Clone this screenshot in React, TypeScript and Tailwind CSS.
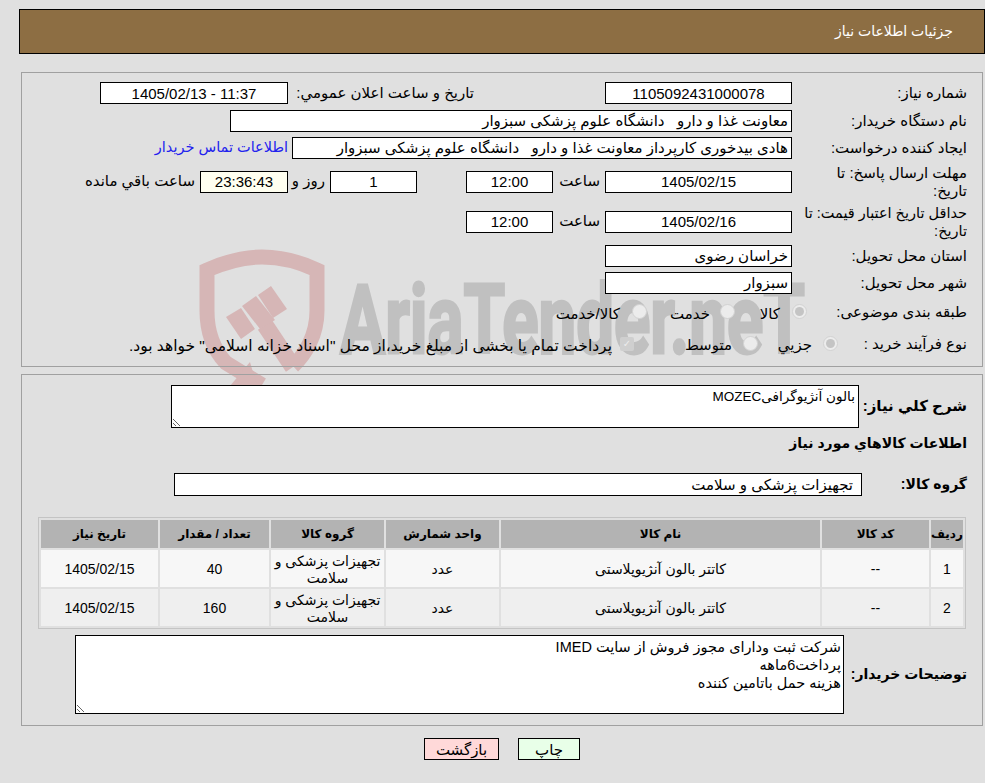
import clsx from "clsx";

const rows = [
  { id: "1", qty: "40" },
  { id: "2", qty: "160" },
];

function Box({ className, cream, children }: { className?: string; cream?: boolean; children?: React.ReactNode }) {
  return (
    <div
      className={clsx(
        "flex h-[22px] shrink-0 items-center overflow-hidden border border-black pt-[1px] whitespace-pre",
        cream ? "bg-[#fffff0]" : "bg-white",
        className,
      )}
    >
      {children}
    </div>
  );
}

function Label({ className, children }: { className?: string; children: React.ReactNode }) {
  return <div className={clsx("w-[175px] shrink-0 leading-[18px]", className ?? "pl-[8px]")}>{children}</div>;
}

function Radio({ checked }: { checked?: boolean }) {
  return (
    <span className="flex h-[15px] w-[15px] shrink-0 items-center justify-center rounded-full border border-[#d2d2d2] bg-[#ececec]">
      {checked && <span className="h-[9px] w-[9px] rounded-full bg-[#c4c4c4]" />}
    </span>
  );
}

function Watermark() {
  return (
    <svg className="pointer-events-none absolute left-0 top-0" width="985" height="783" viewBox="0 0 985 783" fill="none">
      <path
        d="M262 385 L226 363 C213 349 207 331 207 311 L207 270 C225 262 245 257 262 257 C280 257 300 262 317 270 L317 311 C317 335 305 355 293 366"
        stroke="#d6b6b6"
        strokeWidth="15"
      />
      <path d="M265 325 L293 367" stroke="#d6b6b6" strokeWidth="17" />
      <path d="M250 362 L257 386 L230 386 Z" fill="#d6b6b6" />
      <path d="M226 317 L241 308 L255 329 L241 339 Z" fill="#d6b6b6" />
      <path d="M242 306 L256 296 L275 320 L260 329 Z" fill="#d6b6b6" />
      <path d="M258 295 L271 286 L287 309 L273 318 Z" fill="#d6b6b6" />
      <text
        x="340"
        y="353"
        direction="ltr"
        textLength="465"
        lengthAdjust="spacingAndGlyphs"
        fontFamily="Roboto, sans-serif"
        fontWeight="700"
        fontSize="96"
        fill="#c0c0c0"
        stroke="#c0c0c0"
        strokeWidth="3"
      >
        AriaTender.neT
      </text>
    </svg>
  );
}

export default function App() {
  return (
    <div
      dir="rtl"
      className="relative h-[783px] w-[985px] overflow-hidden bg-[#e0e0e0] pt-[9px] font-['Liberation_Sans','DejaVu_Sans',sans-serif] text-[15px] text-black"
    >
      <Watermark />
      <div className="relative flex h-[45px] w-[966px] items-center border border-black bg-[#8d6e43] pr-[31px] text-[14px] text-white">
        جزئیات اطلاعات نیاز
      </div>

      <section className="relative mr-[2px] mt-[18px] h-[295px] w-[962px] border border-[#a0a0a0] pr-[15px] pt-[9px]">
        <div className="flex items-center">
          <Label>شماره نیاز:</Label>
          <Box className="w-[187px] justify-center">1105092431000078</Box>
          <div className="mr-[131px] w-[181px] shrink-0 whitespace-nowrap">تاریخ و ساعت اعلان عمومي:</div>
          <Box className="mr-[5px] w-[188px] justify-center">11:37 - 1405/02/13</Box>
        </div>
        <div className="mt-[5px] flex items-center">
          <Label>نام دستگاه خریدار:</Label>
          <Box className="w-[562px] pr-[3px]">معاونت غذا و دارو   دانشگاه علوم پزشکی سبزوار</Box>
        </div>
        <div className="mt-[5px] flex items-center">
          <Label>ایجاد کننده درخواست:</Label>
          <Box className="w-[500px] pr-[3px]">هادی بیدخوری کارپرداز معاونت غذا و دارو   دانشگاه علوم پزشکی سبزوار</Box>
          <a className="mr-[4px] whitespace-nowrap text-[14.5px] text-[#2222ee]">اطلاعات تماس خریدار</a>
        </div>
        <div className="mt-[5px] flex items-center">
          <Label>مهلت ارسال پاسخ: تا تاریخ:</Label>
          <Box className="w-[187px] justify-center">1405/02/15</Box>
          <div className="w-[52px] shrink-0 pr-[5px]">ساعت</div>
          <Box className="w-[87px] justify-center">12:00</Box>
          <Box className="mr-[49px] w-[87px] justify-center">1</Box>
          <div className="w-[42px] shrink-0 whitespace-nowrap pr-[5px]">روز و</div>
          <Box cream className="w-[88px] justify-center">23:36:43</Box>
          <div className="shrink-0 whitespace-nowrap pr-[5px]">ساعت باقي مانده</div>
        </div>
        <div className="mt-[4px] flex items-center">
          <Label className="pl-[2px] text-[14.5px]">حداقل تاریخ اعتبار قیمت: تا تاریخ:</Label>
          <Box className="w-[187px] justify-center">1405/02/16</Box>
          <div className="w-[52px] shrink-0 pr-[5px]">ساعت</div>
          <Box className="w-[87px] justify-center">12:00</Box>
        </div>
        <div className="mt-[5px] flex items-center">
          <Label>استان محل تحویل:</Label>
          <Box className="w-[187px] pr-[3px]">خراسان رضوی</Box>
        </div>
        <div className="mt-[5px] flex items-center">
          <Label>شهر محل تحویل:</Label>
          <Box className="w-[187px] pr-[3px]">سبزوار</Box>
        </div>
        <div className="mt-[10px] flex h-[16px] items-center">
          <Label>طبقه بندی موضوعی:</Label>
          <span className="mr-[-15px]"><Radio checked /></span>
          <span className="mr-[12px] mt-[6px] w-[20px] shrink-0 whitespace-nowrap">کالا</span>
          <span className="mr-[25px]"><Radio /></span>
          <span className="mr-[10px] mt-[6px] w-[39px] shrink-0 whitespace-nowrap">خدمت</span>
          <span className="mr-[24px]"><Radio /></span>
          <span className="mr-[12px] mt-[6px] shrink-0 whitespace-nowrap">کالا/خدمت</span>
        </div>
        <div className="mt-[16px] flex h-[16px] items-center">
          <Label>نوع فرآیند خرید :</Label>
          <span className="mr-[-46px]"><Radio checked /></span>
          <span className="mr-[11px] mt-[4px] w-[34px] shrink-0 whitespace-nowrap">جزيي</span>
          <span className="mr-[20px]"><Radio /></span>
          <span className="mr-[11px] mt-[4px] w-[45px] shrink-0 whitespace-nowrap">متوسط</span>
          <span className="mr-[53px] flex h-[14px] w-[14px] shrink-0 items-center justify-center rounded-[2px] bg-[#cfcfcf] text-[10px] leading-none text-[#ececec]">✓</span>
          <span className="mr-[8px] mt-[4px] shrink-0 whitespace-nowrap text-[15.5px]">پرداخت تمام یا بخشی از مبلغ خرید،از محل "اسناد خزانه اسلامی" خواهد بود.</span>
        </div>
      </section>

      <section className="relative mr-[2px] mt-[7px] h-[352px] w-[962px] border border-[#a0a0a0] pr-[15px] pt-[10px]">
        <div className="flex items-center">
          <div className="w-[108px] shrink-0 text-[15px] font-bold">شرح کلي نیاز:</div>
          <textarea
            readOnly
            value="بالون آنژیوگرافیMOZEC"
            className="resize h-[43px] w-[688px] shrink-0 border border-black bg-white px-[3px] py-[2px] text-[13.5px] leading-[18px] outline-none"
          />
        </div>
        <div className="mt-[5px] h-[22px] text-[14px] font-bold">اطلاعات کالاهاي مورد نیاز</div>
        <div className="mt-[18px] flex items-center">
          <div className="w-[105px] shrink-0 text-[14px] font-bold">گروه کالا:</div>
          <Box className="h-[23px] w-[688px] pr-[8px]">تجهیزات پزشکی و سلامت</Box>
        </div>
        <table className="mr-[1px] mt-[21px] w-[928px] table-fixed border-separate border-spacing-[2px] border border-[#c4c4c4] text-center text-[14px]">
          <colgroup>
            <col className="w-[32px]" />
            <col className="w-[107px]" />
            <col className="w-[319px]" />
            <col className="w-[113px]" />
            <col className="w-[113px]" />
            <col className="w-[109px]" />
            <col />
          </colgroup>
          <thead>
            <tr className="h-[28px] bg-[#b3b3b3] text-[12px]">
              <th className="font-bold">ردیف</th>
              <th className="font-bold">کد کالا</th>
              <th className="font-bold">نام کالا</th>
              <th className="font-bold">واحد شمارش</th>
              <th className="font-bold">گروه کالا</th>
              <th className="font-bold">تعداد / مقدار</th>
              <th className="font-bold">تاریخ نیاز</th>
            </tr>
          </thead>
          <tbody>
            {rows.map((row) => (
              <tr key={row.id} className={clsx("h-[37px] [&_td]:pt-[2px]", row.id === "1" ? "bg-[#f7f7f7]" : "bg-[#efefef]")}>
                <td>{row.id}</td>
                <td>--</td>
                <td>کاتتر بالون آنژیوپلاستی</td>
                <td>عدد</td>
                <td className="leading-[17px]">تجهیزات پزشکی و سلامت</td>
                <td>{row.qty}</td>
                <td>1405/02/15</td>
              </tr>
            ))}
          </tbody>
        </table>
        <div className="mt-[6px] flex items-center">
          <div className="w-[123px] shrink-0 whitespace-nowrap text-[14px] font-bold">توضیحات خریدار:</div>
          <textarea
            readOnly
            value={"شرکت ثبت ودارای مجوز فروش از سایت IMED\nپرداخت6ماهه\nهزینه حمل باتامین کننده"}
            className="resize h-[79px] w-[769px] shrink-0 border border-black bg-white px-[2px] py-[2px] text-[14.5px] leading-[18px] outline-none"
          />
        </div>
      </section>

      <div className="relative mt-[12px] flex h-[22px] justify-center gap-[19px] pl-[19px]">
        <button className="w-[62px] border border-black bg-[#e8ffe8] leading-none">چاپ</button>
        <button className="w-[75px] border border-black bg-[#ffd9d9] leading-none">بازگشت</button>
      </div>
    </div>
  );
}
